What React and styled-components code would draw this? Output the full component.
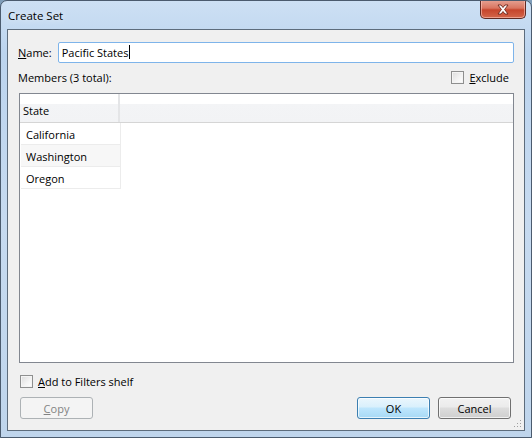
import React from "react";
import styled, { createGlobalStyle } from "styled-components";

const Global = createGlobalStyle`
  html, body { margin: 0; padding: 0; background: #7f9db9; }
  body { font-family: "Open Sans", "Noto Sans", sans-serif; }
`;

const Frame = styled.div`
  width: 532px;
  height: 438px;
  box-sizing: border-box;
  display: flex;
  flex-direction: column;
  border: 1px solid #4b5b6e;
  border-radius: 7px 7px 0 0;
  background: linear-gradient(180deg, #cde0f4 0%, #bcd4ee 12%, #c6daf0 50%, #bfd5ec 100%);
  padding: 0 6px 6px 6px;
  overflow: hidden;
`;

const TitleBar = styled.div`
  height: 28px;
  display: flex;
  align-items: flex-start;
  justify-content: space-between;
`;

const Title = styled.span`
  font-size: 11.5px;
  color: #000;
  margin-top: 7px;
  margin-left: 1px;
  text-shadow: 0 0 6px rgba(255, 255, 255, 0.9);
`;

const CloseButton = styled.div`
  width: 44px;
  height: 18px;
  margin-top: -1px;
  margin-right: -1px;
  border: 1px solid #5f2a23;
  border-top: none;
  border-radius: 0 0 5px 5px;
  background: linear-gradient(180deg, #e6a394 0%, #d97560 45%, #c6452c 55%, #d3664a 100%);
  box-shadow: inset 0 0 0 1px rgba(255, 200, 190, 0.6);
  display: flex;
  align-items: center;
  justify-content: center;
`;

const Client = styled.div`
  flex: 1;
  display: flex;
  flex-direction: column;
  background: #f0f0f0;
  border: 1px solid #5d6c7c;
  padding: 11px 10px 11px 10px;
  position: relative;
`;

const Row = styled.div`
  display: flex;
  align-items: center;
  height: ${(p) => p.$h || 14}px;
  justify-content: ${(p) => p.$justify || "flex-start"};
  margin-top: ${(p) => p.$top || 0}px;
  gap: ${(p) => p.$gap || 0}px;
  font-size: 11px;
  color: #000;
`;

const Label = styled.span`
  font-size: 11px;
  color: #000;
  white-space: nowrap;
`;

const Key = styled.span`
  text-decoration: underline;
`;

const TextInput = styled.div`
  flex: 1;
  height: 21px;
  box-sizing: border-box;
  border: 1px solid #7eb4ea;
  border-radius: 2px;
  background: #fff;
  display: flex;
  align-items: center;
  padding-left: 3px;
  font-size: 11px;
`;

const Caret = styled.span`
  display: inline-block;
  width: 1px;
  height: 14px;
  background: #000;
  margin-left: 1px;
`;

const CheckRow = styled.label`
  display: flex;
  align-items: center;
  gap: 5px;
  font-size: 11px;
  color: #000;
`;

const Box = styled.span`
  width: 13px;
  height: 13px;
  box-sizing: border-box;
  border: 1px solid #8e8f8f;
  background: linear-gradient(135deg, #dcdcdc 0%, #f4f4f4 60%, #fff 100%);
  box-shadow: inset 0 0 0 1px #f4f4f4;
`;

const Grid = styled.div`
  flex: 1;
  margin-top: 9px;
  margin-left: 1px;
  border: 1px solid #828790;
  background: #fff;
  display: flex;
  flex-direction: column;
`;

const HeaderRow = styled.div`
  display: grid;
  grid-template-columns: 100px 1fr;
  height: 28px;
  border-bottom: 1px solid #d5d5d5;
  background: linear-gradient(180deg, #ffffff 0%, #ffffff 34%, #f3f4f6 36%, #f2f3f5 100%);
`;

const HeaderCell = styled.div`
  display: flex;
  align-items: center;
  padding-left: 3px;
  padding-top: 4px;
  font-size: 11px;
  color: #000;
  border-right: ${(p) => (p.$last ? "none" : "2px solid #e4e5e7")};
`;

const DataRow = styled.div`
  width: 100px;
  height: 22px;
  box-sizing: border-box;
  margin-left: 1px;
  border-bottom: 1px solid #ececec;
  border-right: 1px solid #ececec;
  background: ${(p) => (p.$alt ? "#f7f7f7" : "#fff")};
  display: flex;
  align-items: center;
  padding-left: 5px;
  padding-top: 1px;
  font-size: 11px;
  color: #000;
`;

const Button = styled.div`
  width: 73px;
  height: 22px;
  box-sizing: border-box;
  border: 1px solid ${(p) => (p.$disabled ? "#adb2b5" : p.$primary ? "#3c7fb1" : "#707070")};
  border-radius: 3px;
  background: ${(p) =>
    p.$disabled
      ? "#f4f4f4"
      : p.$primary
      ? "linear-gradient(180deg, #eaf6fd 0%, #d9f0fc 45%, #bee6fd 50%, #a7d9f5 100%)"
      : "linear-gradient(180deg, #f2f2f2 0%, #ebebeb 45%, #dddddd 50%, #cfcfcf 100%)"};
  box-shadow: inset 0 0 0 1px ${(p) => (p.$disabled ? "#f4f4f4" : "rgba(255,255,255,0.7)")};
  display: flex;
  align-items: center;
  justify-content: center;
  font-size: 11px;
  color: ${(p) => (p.$disabled ? "#838383" : "#000")};
`;

const Buttons = styled.div`
  display: flex;
  gap: 8px;
`;

const Grip = styled.svg`
  position: absolute;
  right: 2px;
  bottom: 2px;
`;

function CloseGlyph() {
  return (
    <svg width="14" height="11" viewBox="0 0 14 11">
      <path
        d="M2 1 L5 1 L7 3.5 L9 1 L12 1 L8.6 5.5 L12 10 L9 10 L7 7.5 L5 10 L2 10 L5.4 5.5 Z"
        fill="#fff"
        stroke="#6b2418"
        strokeWidth="0.9"
        strokeLinejoin="round"
      />
    </svg>
  );
}

const states = ["California", "Washington", "Oregon"];

export default function App() {
  return (
    <>
      <Global />
      <Frame>
        <TitleBar>
          <Title>Create Set</Title>
          <CloseButton>
            <CloseGlyph />
          </CloseButton>
        </TitleBar>
        <Client>
          <Row $h={22} $gap={6}>
            <Label>
              <Key>N</Key>ame:
            </Label>
            <TextInput>
              Pacific States
              <Caret />
            </TextInput>
          </Row>
          <Row $top={7} $justify="space-between">
            <Label>Members (3 total):</Label>
            <CheckRow style={{ marginRight: 5 }}>
              <Box />
              <span>
                <Key>E</Key>xclude
              </span>
            </CheckRow>
          </Row>
          <Grid>
            <HeaderRow>
              <HeaderCell>State</HeaderCell>
              <HeaderCell $last />
            </HeaderRow>
            {states.map((s, i) => (
              <DataRow key={s} $alt={i % 2 === 1}>
                {s}
              </DataRow>
            ))}
          </Grid>
          <Row $top={11}>
            <CheckRow style={{ marginLeft: 2 }}>
              <Box />
              <span>
                <Key>A</Key>dd to Filters shelf
              </span>
            </CheckRow>
          </Row>
          <Row $h={22} $top={9} $justify="space-between" style={{ paddingLeft: 2, paddingRight: 3 }}>
            <Button $disabled>
              <span>
                <Key>C</Key>opy
              </span>
            </Button>
            <Buttons>
              <Button $primary>OK</Button>
              <Button>Cancel</Button>
            </Buttons>
          </Row>
          <Grip width="10" height="10" viewBox="0 0 10 10">
            {[
              [8, 2],
              [8, 5],
              [5, 5],
              [8, 8],
              [5, 8],
              [2, 8],
            ].map(([x, y]) => (
              <rect key={`${x}-${y}`} x={x} y={y} width="1" height="1" fill="#a0a0a0" />
            ))}
          </Grip>
        </Client>
      </Frame>
    </>
  );
}
